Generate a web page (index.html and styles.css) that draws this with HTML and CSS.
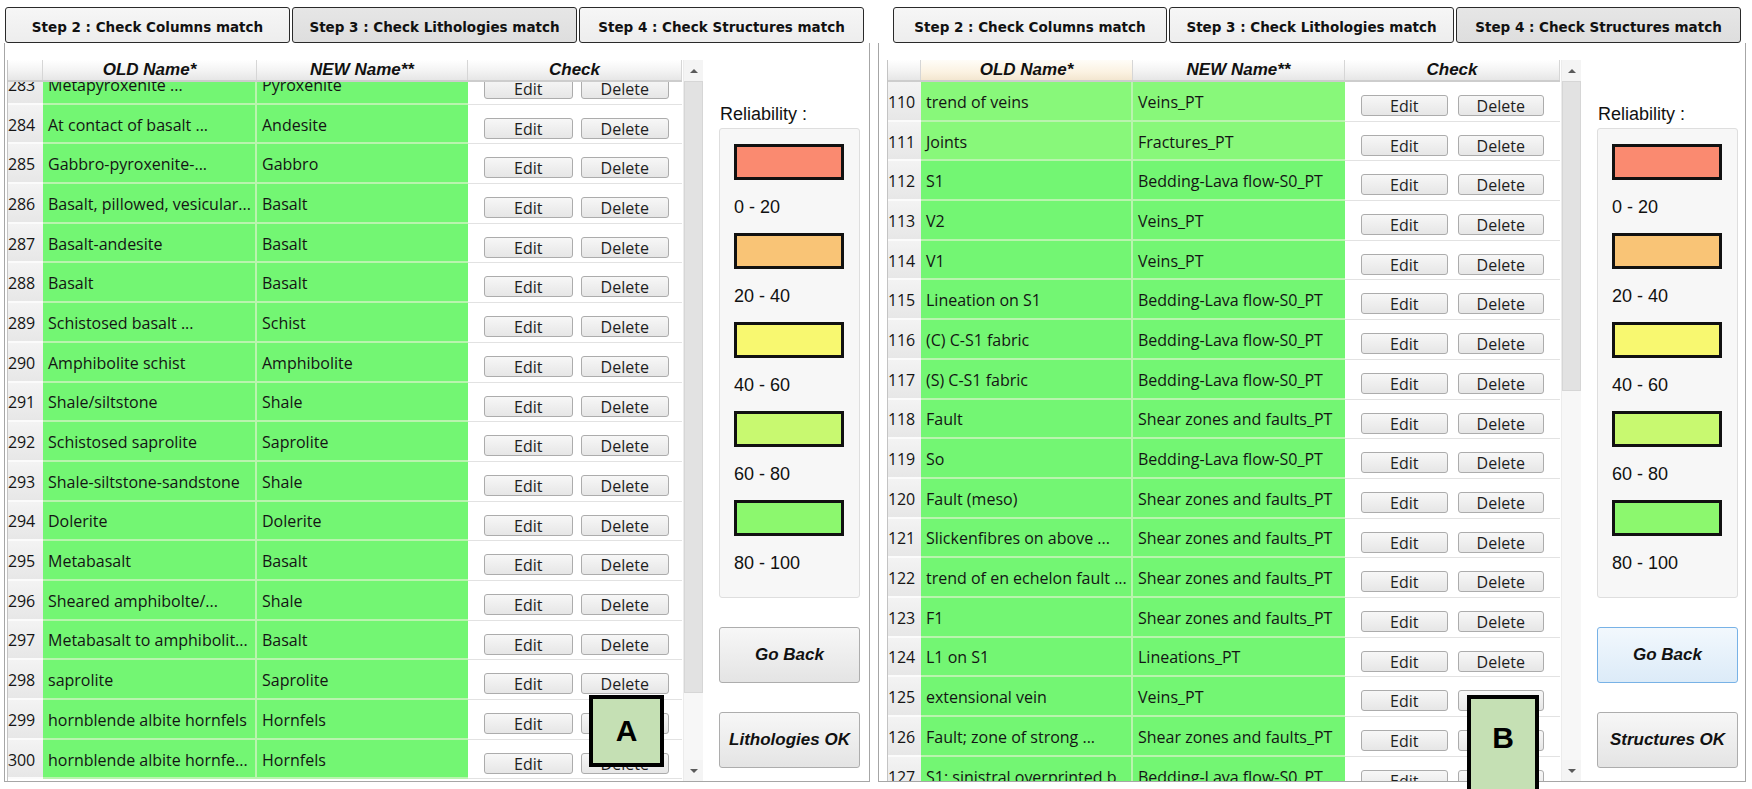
FILE: index.html
```html
<!DOCTYPE html>
<html lang="en">
<head>
<meta charset="utf-8">
<title>Check matches</title>
<link rel="stylesheet" href="styles.css">
</head>
<body>
<div class="screen">

  <section class="panel panel--left">
    <nav class="tabs">
      <div class="tab">Step 2 : Check Columns match</div>
      <div class="tab tab--active">Step 3 : Check Lithologies match</div>
      <div class="tab">Step 4 : Check Structures match</div>
    </nav>
    <div class="panel-body">
      <div class="grid">
        <div class="table">
          <div class="thead">
            <div class="th c-num"></div>
            <div class="th c-old">OLD Name*</div>
            <div class="th c-new">NEW Name**</div>
            <div class="th c-chk">Check</div>
          </div>
          <div class="tbody">
            <div class="rows rows--scrolled">
              <div class="row"><div class="cell c-num">283</div><div class="cell c-old">Metapyroxenite ...</div><div class="cell c-new">Pyroxenite</div><div class="cell c-chk"><span class="btn">Edit</span><span class="btn">Delete</span></div></div>
              <div class="row"><div class="cell c-num">284</div><div class="cell c-old">At contact of basalt ...</div><div class="cell c-new">Andesite</div><div class="cell c-chk"><span class="btn">Edit</span><span class="btn">Delete</span></div></div>
              <div class="row"><div class="cell c-num">285</div><div class="cell c-old">Gabbro-pyroxenite-...</div><div class="cell c-new">Gabbro</div><div class="cell c-chk"><span class="btn">Edit</span><span class="btn">Delete</span></div></div>
              <div class="row"><div class="cell c-num">286</div><div class="cell c-old">Basalt, pillowed, vesicular...</div><div class="cell c-new">Basalt</div><div class="cell c-chk"><span class="btn">Edit</span><span class="btn">Delete</span></div></div>
              <div class="row"><div class="cell c-num">287</div><div class="cell c-old">Basalt-andesite</div><div class="cell c-new">Basalt</div><div class="cell c-chk"><span class="btn">Edit</span><span class="btn">Delete</span></div></div>
              <div class="row"><div class="cell c-num">288</div><div class="cell c-old">Basalt</div><div class="cell c-new">Basalt</div><div class="cell c-chk"><span class="btn">Edit</span><span class="btn">Delete</span></div></div>
              <div class="row"><div class="cell c-num">289</div><div class="cell c-old">Schistosed basalt ...</div><div class="cell c-new">Schist</div><div class="cell c-chk"><span class="btn">Edit</span><span class="btn">Delete</span></div></div>
              <div class="row"><div class="cell c-num">290</div><div class="cell c-old">Amphibolite schist</div><div class="cell c-new">Amphibolite</div><div class="cell c-chk"><span class="btn">Edit</span><span class="btn">Delete</span></div></div>
              <div class="row"><div class="cell c-num">291</div><div class="cell c-old">Shale/siltstone</div><div class="cell c-new">Shale</div><div class="cell c-chk"><span class="btn">Edit</span><span class="btn">Delete</span></div></div>
              <div class="row"><div class="cell c-num">292</div><div class="cell c-old">Schistosed saprolite</div><div class="cell c-new">Saprolite</div><div class="cell c-chk"><span class="btn">Edit</span><span class="btn">Delete</span></div></div>
              <div class="row"><div class="cell c-num">293</div><div class="cell c-old">Shale-siltstone-sandstone</div><div class="cell c-new">Shale</div><div class="cell c-chk"><span class="btn">Edit</span><span class="btn">Delete</span></div></div>
              <div class="row"><div class="cell c-num">294</div><div class="cell c-old">Dolerite</div><div class="cell c-new">Dolerite</div><div class="cell c-chk"><span class="btn">Edit</span><span class="btn">Delete</span></div></div>
              <div class="row"><div class="cell c-num">295</div><div class="cell c-old">Metabasalt</div><div class="cell c-new">Basalt</div><div class="cell c-chk"><span class="btn">Edit</span><span class="btn">Delete</span></div></div>
              <div class="row"><div class="cell c-num">296</div><div class="cell c-old">Sheared amphibolte/...</div><div class="cell c-new">Shale</div><div class="cell c-chk"><span class="btn">Edit</span><span class="btn">Delete</span></div></div>
              <div class="row"><div class="cell c-num">297</div><div class="cell c-old">Metabasalt to amphibolit...</div><div class="cell c-new">Basalt</div><div class="cell c-chk"><span class="btn">Edit</span><span class="btn">Delete</span></div></div>
              <div class="row"><div class="cell c-num">298</div><div class="cell c-old">saprolite</div><div class="cell c-new">Saprolite</div><div class="cell c-chk"><span class="btn">Edit</span><span class="btn">Delete</span></div></div>
              <div class="row"><div class="cell c-num">299</div><div class="cell c-old">hornblende albite hornfels</div><div class="cell c-new">Hornfels</div><div class="cell c-chk"><span class="btn">Edit</span><span class="btn">Delete</span></div></div>
              <div class="row"><div class="cell c-num">300</div><div class="cell c-old">hornblende albite hornfe...</div><div class="cell c-new">Hornfels</div><div class="cell c-chk"><span class="btn">Edit</span><span class="btn">Delete</span></div></div>
            </div>
          </div>
        </div>
        <div class="scroll">
          <div class="scroll-btn"><span class="tri tri--up"></span></div>
          <div class="scroll-thumb scroll-thumb--long"></div>
          <div class="scroll-track"></div>
          <div class="scroll-btn"><span class="tri tri--down"></span></div>
        </div>
      </div>
      <aside class="side">
        <div class="rel-label">Reliability :</div>
        <div class="legend">
          <div class="swatch sw-1"></div><div class="range">0 - 20</div>
          <div class="swatch sw-2"></div><div class="range">20 - 40</div>
          <div class="swatch sw-3"></div><div class="range">40 - 60</div>
          <div class="swatch sw-4"></div><div class="range">60 - 80</div>
          <div class="swatch sw-5"></div><div class="range">80 - 100</div>
        </div>
        <div class="action">Go Back</div>
        <div class="action">Lithologies OK</div>
      </aside>
    </div>
    <div class="marker marker--a">A</div>
  </section>

  <section class="panel panel--right">
    <nav class="tabs">
      <div class="tab tab--first">Step 2 : Check Columns match</div>
      <div class="tab">Step 3 : Check Lithologies match</div>
      <div class="tab tab--active">Step 4 : Check Structures match</div>
    </nav>
    <div class="panel-body">
      <div class="grid">
        <div class="table">
          <div class="thead">
            <div class="th c-num"></div>
            <div class="th c-old th--hover">OLD Name*</div>
            <div class="th c-new">NEW Name**</div>
            <div class="th c-chk">Check</div>
          </div>
          <div class="tbody">
            <div class="rows">
              <div class="row row--light"><div class="cell c-num">110</div><div class="cell c-old">trend of veins</div><div class="cell c-new">Veins_PT</div><div class="cell c-chk"><span class="btn">Edit</span><span class="btn">Delete</span></div></div>
              <div class="row row--light"><div class="cell c-num">111</div><div class="cell c-old">Joints</div><div class="cell c-new">Fractures_PT</div><div class="cell c-chk"><span class="btn">Edit</span><span class="btn">Delete</span></div></div>
              <div class="row"><div class="cell c-num">112</div><div class="cell c-old">S1</div><div class="cell c-new">Bedding-Lava flow-S0_PT</div><div class="cell c-chk"><span class="btn">Edit</span><span class="btn">Delete</span></div></div>
              <div class="row"><div class="cell c-num">113</div><div class="cell c-old">V2</div><div class="cell c-new">Veins_PT</div><div class="cell c-chk"><span class="btn">Edit</span><span class="btn">Delete</span></div></div>
              <div class="row"><div class="cell c-num">114</div><div class="cell c-old">V1</div><div class="cell c-new">Veins_PT</div><div class="cell c-chk"><span class="btn">Edit</span><span class="btn">Delete</span></div></div>
              <div class="row"><div class="cell c-num">115</div><div class="cell c-old">Lineation on S1</div><div class="cell c-new">Bedding-Lava flow-S0_PT</div><div class="cell c-chk"><span class="btn">Edit</span><span class="btn">Delete</span></div></div>
              <div class="row"><div class="cell c-num">116</div><div class="cell c-old">(C) C-S1 fabric</div><div class="cell c-new">Bedding-Lava flow-S0_PT</div><div class="cell c-chk"><span class="btn">Edit</span><span class="btn">Delete</span></div></div>
              <div class="row"><div class="cell c-num">117</div><div class="cell c-old">(S) C-S1 fabric</div><div class="cell c-new">Bedding-Lava flow-S0_PT</div><div class="cell c-chk"><span class="btn">Edit</span><span class="btn">Delete</span></div></div>
              <div class="row"><div class="cell c-num">118</div><div class="cell c-old">Fault</div><div class="cell c-new">Shear zones and faults_PT</div><div class="cell c-chk"><span class="btn">Edit</span><span class="btn">Delete</span></div></div>
              <div class="row"><div class="cell c-num">119</div><div class="cell c-old">So</div><div class="cell c-new">Bedding-Lava flow-S0_PT</div><div class="cell c-chk"><span class="btn">Edit</span><span class="btn">Delete</span></div></div>
              <div class="row"><div class="cell c-num">120</div><div class="cell c-old">Fault (meso)</div><div class="cell c-new">Shear zones and faults_PT</div><div class="cell c-chk"><span class="btn">Edit</span><span class="btn">Delete</span></div></div>
              <div class="row"><div class="cell c-num">121</div><div class="cell c-old">Slickenfibres on above ...</div><div class="cell c-new">Shear zones and faults_PT</div><div class="cell c-chk"><span class="btn">Edit</span><span class="btn">Delete</span></div></div>
              <div class="row"><div class="cell c-num">122</div><div class="cell c-old">trend of en echelon fault ...</div><div class="cell c-new">Shear zones and faults_PT</div><div class="cell c-chk"><span class="btn">Edit</span><span class="btn">Delete</span></div></div>
              <div class="row"><div class="cell c-num">123</div><div class="cell c-old">F1</div><div class="cell c-new">Shear zones and faults_PT</div><div class="cell c-chk"><span class="btn">Edit</span><span class="btn">Delete</span></div></div>
              <div class="row"><div class="cell c-num">124</div><div class="cell c-old">L1 on S1</div><div class="cell c-new">Lineations_PT</div><div class="cell c-chk"><span class="btn">Edit</span><span class="btn">Delete</span></div></div>
              <div class="row"><div class="cell c-num">125</div><div class="cell c-old">extensional vein</div><div class="cell c-new">Veins_PT</div><div class="cell c-chk"><span class="btn">Edit</span><span class="btn">Delete</span></div></div>
              <div class="row"><div class="cell c-num">126</div><div class="cell c-old">Fault; zone of strong ...</div><div class="cell c-new">Shear zones and faults_PT</div><div class="cell c-chk"><span class="btn">Edit</span><span class="btn">Delete</span></div></div>
              <div class="row"><div class="cell c-num">127</div><div class="cell c-old">S1: sinistral overprinted b</div><div class="cell c-new">Bedding-Lava flow-S0_PT</div><div class="cell c-chk"><span class="btn">Edit</span><span class="btn">Delete</span></div></div>
            </div>
          </div>
        </div>
        <div class="scroll">
          <div class="scroll-btn"><span class="tri tri--up"></span></div>
          <div class="scroll-thumb scroll-thumb--short"></div>
          <div class="scroll-track"></div>
          <div class="scroll-btn"><span class="tri tri--down"></span></div>
        </div>
      </div>
      <aside class="side">
        <div class="rel-label">Reliability :</div>
        <div class="legend">
          <div class="swatch sw-1"></div><div class="range">0 - 20</div>
          <div class="swatch sw-2"></div><div class="range">20 - 40</div>
          <div class="swatch sw-3"></div><div class="range">40 - 60</div>
          <div class="swatch sw-4"></div><div class="range">60 - 80</div>
          <div class="swatch sw-5"></div><div class="range">80 - 100</div>
        </div>
        <div class="action action--focus">Go Back</div>
        <div class="action">Structures OK</div>
      </aside>
    </div>
    <div class="marker marker--b">B</div>
  </section>

</div>
</body>
</html>
```

FILE: styles.css
```css
* { box-sizing: border-box; }

html, body {
  margin: 0;
  background: #ffffff;
  font-family: "Liberation Sans", Arial, sans-serif;
  color: #111;
}

.screen {
  display: flex;
  gap: 8px;
  width: 1752px;
  height: 789px;
  padding: 7px 0 0 4px;
  overflow: hidden;
}

.panel {
  position: relative;
  display: flex;
  flex-direction: column;
  height: 775px;
}

.panel--left {
  width: 866px;
  --w-num: 35px;
  --w-old: 214px;
  --w-new: 211px;
  --w-chk: 214px;
  --table-pad: 2px;
  --chk-pad-r: 13px;
  --chk-pad-l: 16px;
  --chk-gap: 8px;
  --tabs-pad: 1px;
}

.panel--right {
  width: 868px;
  --w-num: 33px;
  --w-old: 212px;
  --w-new: 212px;
  --w-chk: 215px;
  --table-pad: 8px;
  --chk-pad-r: 16px;
  --chk-pad-l: 16px;
  --chk-gap: 10px;
  --tabs-pad: 15px;
}

/* tabs */
.tabs {
  display: flex;
  gap: 2px;
  height: 36px;
  padding-left: var(--tabs-pad);
}

.tab {
  width: 285px;
  padding-top: 3px;
  border: 1px solid #2a2a2a;
  border-radius: 3px;
  background: linear-gradient(#f6f6f6, #ededed);
  font-family: "DejaVu Sans", Verdana, sans-serif;
  font-weight: bold;
  font-size: 13.5px;
  display: flex;
  align-items: center;
  justify-content: center;
  color: #111;
  white-space: nowrap;
}

.tab--first {
  width: 274px;
}

.tab--active {
  background: linear-gradient(#e6e6e6, #dedede);
}

/* body */
.panel-body {
  flex: 1;
  display: flex;
  border: 1px solid #a6a6a6;
  border-top: none;
  padding: 17px 0 0 var(--table-pad);
}

.grid {
  display: flex;
  height: 721px;
}

.table {
  display: flex;
  flex-direction: column;
  border-left: 1px solid #c4c4c4;
}

.c-num { width: var(--w-num); }
.c-old { width: var(--w-old); }
.c-new { width: var(--w-new); }
.c-chk { width: var(--w-chk); }

.thead {
  display: flex;
  height: 22px;
  flex: none;
  background: linear-gradient(#ffffff, #f3f3f3 55%, #e6e6e6);
  border-bottom: 2px solid #cdcdcd;
}

.th {
  display: flex;
  align-items: center;
  justify-content: center;
  font-style: italic;
  font-weight: bold;
  font-size: 17px;
  color: #111;
  border-right: 1px solid #d6d6d6;
}

.th--hover {
  background: linear-gradient(#fffdf8, #fbf2e2 60%, #f3e6d0);
}

.tbody {
  flex: 1;
  overflow: hidden;
}

.rows--scrolled {
  margin-top: -17px;
}

.row {
  display: flex;
  height: 39.7px;
}

.cell {
  display: flex;
  align-items: center;
  padding-top: 2px;
  font-family: "Open Sans", "Noto Sans", sans-serif;
  font-size: 16px;
  line-height: 20px;
  color: #141414;
  white-space: nowrap;
  overflow: hidden;
}

.cell.c-num {
  padding-left: 0;
  letter-spacing: -0.2px;
  background: linear-gradient(#f3f3f3, #e7e7e7);
  border-bottom: 2px solid #fbfbfb;
}

.cell.c-old,
.cell.c-new {
  padding-left: 5px;
  background: #73f673;
  border-bottom: 2px solid #b9f4ae;
}

.cell.c-old {
  border-right: 2px solid #b9f4ae;
}

.row--light .cell.c-old,
.row--light .cell.c-new {
  background: #88f87a;
}

.cell.c-chk {
  align-items: flex-start;
  gap: var(--chk-gap);
  padding: 13px var(--chk-pad-r) 0 var(--chk-pad-l);
  background: #ffffff;
  border-bottom: 1px solid #e2e2e2;
}

.btn {
  flex: 1;
  height: 21px;
  padding-top: 1px;
  border: 1px solid #acacac;
  border-radius: 3px;
  background: linear-gradient(#f7f7f7, #e6e6e6);
  font-size: 16px;
  line-height: 18px;
  text-align: center;
  color: #1e1e1e;
}

/* scrollbar */
.scroll {
  width: 20px;
  margin-left: 1px;
  display: flex;
  flex-direction: column;
  background: #f3f3f3;
  border-left: 1px solid #ececec;
}

.scroll-btn {
  height: 21px;
  flex: none;
  display: flex;
  align-items: center;
  justify-content: center;
  background: #f4f4f4;
}

.tri {
  width: 0;
  height: 0;
  border-left: 4px solid transparent;
  border-right: 4px solid transparent;
}

.tri--up { border-bottom: 4px solid #5a5a5a; }
.tri--down { border-top: 4px solid #5a5a5a; }

.scroll-thumb {
  flex: none;
  background: #e2e2e2;
  border: 1px solid #d6d6d6;
}

.scroll-thumb--long { height: 612px; }
.scroll-thumb--short { height: 310px; }

.scroll-track {
  flex: 1;
  background: #f7f7f7;
}

/* side column */
.side {
  width: 141px;
  margin-left: 16px;
  padding-top: 44px;
  display: flex;
  flex-direction: column;
}

.rel-label {
  font-size: 18px;
  line-height: 20px;
  height: 20px;
  margin: 0 0 4px 1px;
  color: #111;
}

.legend {
  border: 1px solid #dedede;
  border-radius: 3px;
  background: #f7f7f7;
  padding: 15px 0 8px 14px;
}

.swatch {
  width: 110px;
  height: 36px;
  border: 3px solid #111;
}

.sw-1 { background: #fa8a70; }
.sw-2 { background: #f9c476; }
.sw-3 { background: #f8f870; }
.sw-4 { background: #c8f970; }
.sw-5 { background: #8cf86e; }

.range {
  font-size: 18px;
  line-height: 20px;
  margin: 17px 0 16px;
  color: #111;
}

.action {
  height: 56px;
  margin-top: 29px;
  border: 1px solid #adadad;
  border-radius: 3px;
  background: linear-gradient(#f7f7f7, #e4e4e4);
  display: flex;
  align-items: center;
  justify-content: center;
  font-style: italic;
  font-weight: bold;
  font-size: 17px;
  color: #111;
}

.action--focus {
  border-color: #78b2e6;
  background: linear-gradient(#f2f8fd, #dcebf8);
}

/* overlay markers */
.marker {
  position: absolute;
  top: 688px;
  border: 4px solid #000;
  background: #c5e0b4;
  font-family: "Liberation Sans", Arial, sans-serif;
  font-weight: bold;
  font-size: 30px;
  display: flex;
  align-items: center;
  justify-content: center;
  color: #000;
}

.marker--a {
  left: 585px;
  width: 75px;
  height: 72px;
}

.marker--b {
  left: 589px;
  width: 72px;
  height: 100px;
  padding-bottom: 14px;
}
```
